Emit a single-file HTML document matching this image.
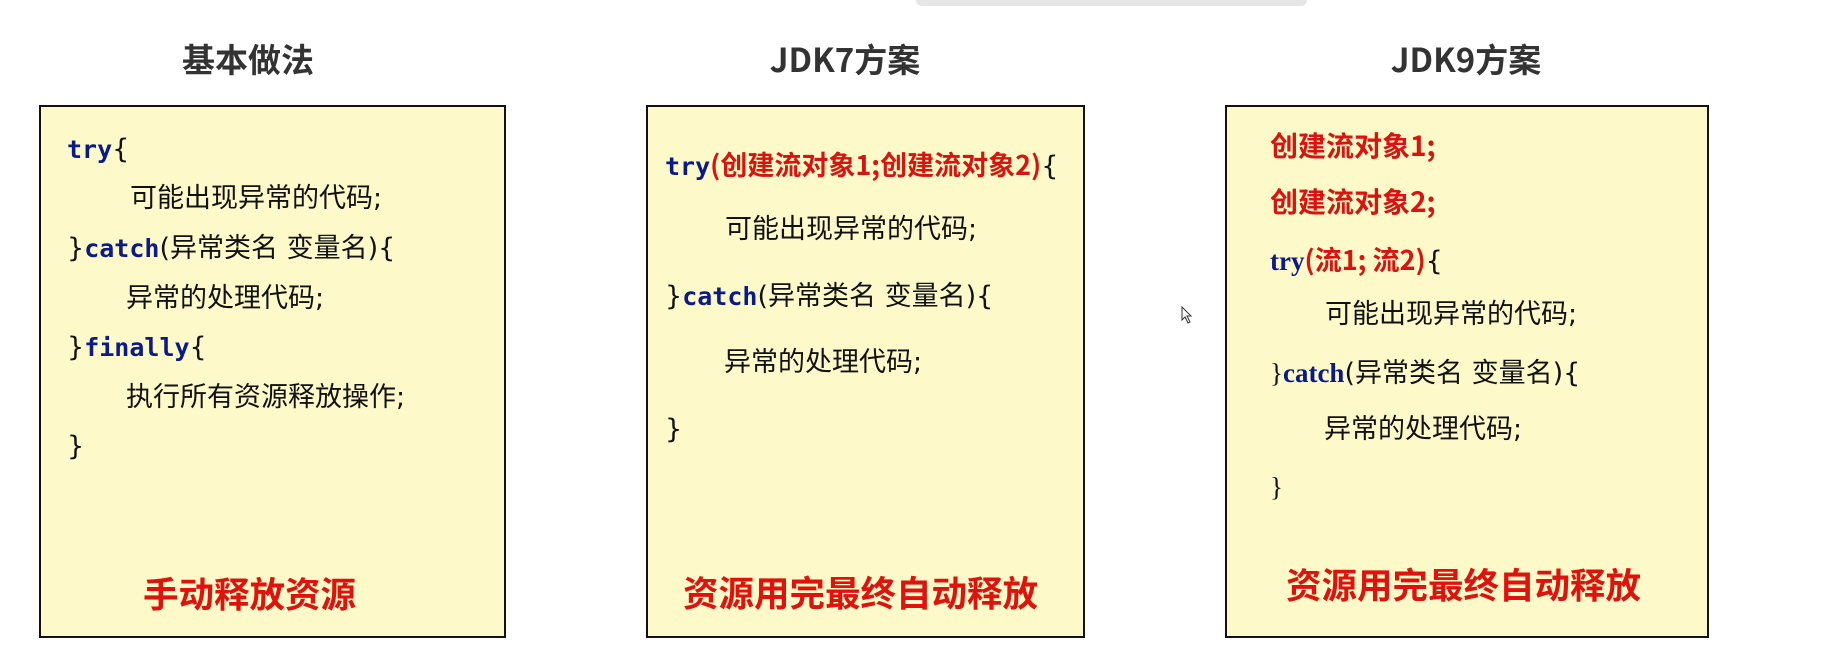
<!DOCTYPE html>
<html><head><meta charset="utf-8"><style>
body{margin:0;width:1830px;height:655px;background:#fff;position:relative;overflow:hidden;font-family:"Liberation Sans","Noto Sans CJK SC",sans-serif;}
.t{position:absolute;font-weight:bold;font-size:33px;color:#333;white-space:nowrap;transform:translateX(-50%);line-height:40px;font-family:"Noto Sans CJK SC",sans-serif}
.box{position:absolute;background:#fdf9c9;border:2px solid #111;box-sizing:border-box}
.l{position:absolute;white-space:nowrap;font-size:27px;line-height:32px;color:#111;font-family:"DejaVu Sans","Noto Sans CJK SC",sans-serif}
.k{color:#0b1a8a;font-weight:bold;font-family:"DejaVu Sans Mono",monospace;font-size:25px}
.s{color:#0b1a8a;font-weight:bold;font-family:"Liberation Serif",serif}
.r{color:#d8140e;font-weight:bold;font-family:"Noto Sans CJK SC",sans-serif}
.big{position:absolute;white-space:nowrap;color:#e0120c;font-weight:bold;font-size:35.5px;line-height:40px;font-family:"Noto Sans CJK SC",sans-serif}
</style></head><body>
<div style="position:absolute;left:916px;top:0;width:391px;height:6px;background:#e6e6e6;border-radius:0 0 8px 8px"></div>
<div class="t" style="left:248px;top:38px">基本做法</div>
<div class="t" style="left:845px;top:38px">JDK7方案</div>
<div class="t" style="left:1466px;top:38px">JDK9方案</div>

<div class="box" style="left:39px;top:105px;width:467px;height:533px"></div>
<div class="l" style="left:67px;top:134px"><span class="k">try</span>{</div>
<div class="l" style="left:130px;top:183px">可能出现异常的代码;</div>
<div class="l" style="left:67px;top:233px">}<span class="k">catch</span>(异常类名 变量名){</div>
<div class="l" style="left:126px;top:283px">异常的处理代码;</div>
<div class="l" style="left:67px;top:332px">}<span class="k">finally</span>{</div>
<div class="l" style="left:126px;top:382px">执行所有资源释放操作;</div>
<div class="l" style="left:67px;top:431px">}</div>
<div class="big" style="left:143px;top:573px">手动释放资源</div>

<div class="box" style="left:646px;top:105px;width:439px;height:533px"></div>
<div class="l" style="left:665px;top:148px"><span class="k">try</span><span class="r">(创建流对象1;创建流对象2)</span>{</div>
<div class="l" style="left:725px;top:214px">可能出现异常的代码;</div>
<div class="l" style="left:665px;top:281px">}<span class="k">catch</span>(异常类名 变量名){</div>
<div class="l" style="left:724px;top:347px">异常的处理代码;</div>
<div class="l" style="left:665px;top:414px">}</div>
<div class="big" style="left:683px;top:572px">资源用完最终自动释放</div>

<div class="box" style="left:1225px;top:105px;width:484px;height:533px"></div>
<div class="l r" style="left:1270px;top:129px;font-size:28px">创建流对象1;</div>
<div class="l r" style="left:1270px;top:185px;font-size:28px">创建流对象2;</div>
<div class="l" style="left:1270px;top:243px"><span class="s">try</span><span class="r">(流1; 流2)</span>{</div>
<div class="l" style="left:1325px;top:299px">可能出现异常的代码;</div>
<div class="l" style="left:1270px;top:357px"><span style="font-family:'Liberation Serif',serif">}</span><span class="s">catch</span>(异常类名 变量名){</div>
<div class="l" style="left:1324px;top:414px">异常的处理代码;</div>
<div class="l" style="left:1270px;top:471px;font-family:'Liberation Serif',serif">}</div>
<div class="big" style="left:1286px;top:564px">资源用完最终自动释放</div>

<svg style="position:absolute;left:1181px;top:306px" width="12" height="18" viewBox="0 0 12 18"><path d="M1 1 L1 14 L4 11 L7 17 L9 16 L6 10 L10 10 Z" fill="#fff" stroke="#333" stroke-width="1"/></svg>
</body></html>
